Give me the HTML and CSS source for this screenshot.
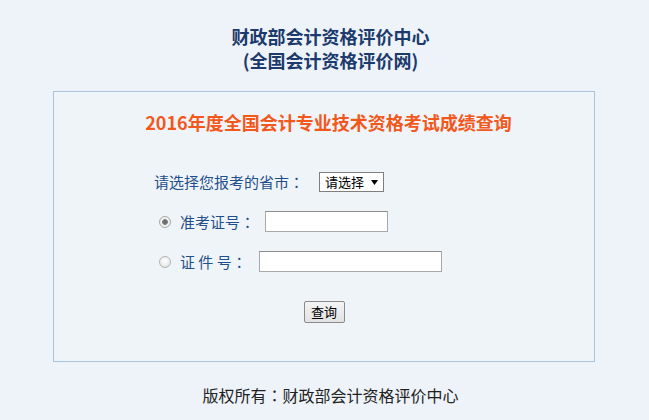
FILE: index.html
```html
<!DOCTYPE html>
<html lang="zh-CN">
<head>
<meta charset="utf-8">
<title>2016年度全国会计专业技术资格考试成绩查询</title>
<link rel="stylesheet" href="styles.css">
</head>
<body>
<div class="page">
  <header class="header">
    <div class="title">财政部会计资格评价中心</div>
    <div class="title">(全国会计资格评价网)</div>
  </header>
  <section class="box">
    <h2 class="heading">2016年度全国会计专业技术资格考试成绩查询</h2>
    <form class="form">
      <div class="row row-select">
        <span class="label">请选择您报考的省市<span class="colon" lang="zh-TW">：</span></span>
        <span class="select">
          <span class="select-text">请选择</span>
          <svg class="select-arrow" width="7" height="5" viewBox="0 0 7 5"><path d="M0 0H7L3.5 5Z" fill="#000"/></svg>
        </span>
      </div>
      <div class="row">
        <input class="radio" type="radio" name="t" checked>
        <span class="label label-radio">准考证号<span class="colon" lang="zh-TW">：</span></span>
        <input class="text text-short" type="text">
      </div>
      <div class="row">
        <input class="radio" type="radio" name="t">
        <span class="label label-radio">证 件 号<span class="colon" lang="zh-TW">：</span></span>
        <input class="text text-long" type="text">
      </div>
      <div class="actions">
        <button class="btn" type="button">查询</button>
      </div>
    </form>
  </section>
  <footer class="footer">版权所有<span class="colon" lang="zh-TW">：</span>财政部会计资格评价中心</footer>
</div>
</body>
</html>
```
FILE: styles.css
```css
html, body {
  margin: 0;
  padding: 0;
  background: #edf3f8;
}
body {
  font-family: "Noto Sans CJK SC", "Liberation Sans", sans-serif;
  color: #222;
}
.page {
  display: flex;
  flex-direction: column;
  width: 649px;
  height: 420px;
  overflow: hidden;
}
.header {
  padding-top: 24px;
  padding-left: 12px;
  text-align: center;
}
.title {
  font-size: 18px;
  font-weight: bold;
  line-height: 24px;
  color: #1c3a6b;
}
.colon {
  font-family: "Noto Sans CJK TC", "Noto Sans CJK SC", sans-serif;
}
.box {
  margin-top: 19px;
  margin-left: 53px;
  width: 540px;
  border: 1px solid #a9c4dc;
  background: #eff4f8;
  box-sizing: content-box;
}
.heading {
  margin: 0;
  padding-top: 18px;
  padding-left: 9px;
  font-size: 18px;
  line-height: 24px;
  font-weight: bold;
  text-align: center;
  color: #f2581c;
}
.form {
  margin: 38px 0 0 0;
  padding-left: 100px;
  padding-bottom: 38px;
}
.row {
  display: flex;
  align-items: center;
  height: 21px;
  margin-bottom: 19px;
}
.row-select {
  height: 20px;
}
.label {
  font-size: 15px;
  line-height: 20px;
  color: #1f4f8c;
  white-space: pre;
}
.select {
  display: flex;
  align-items: center;
  justify-content: space-between;
  box-sizing: border-box;
  width: 65px;
  height: 20px;
  margin-left: 15px;
  padding: 0 5px 0 5px;
  border: 1px solid #7f7f7f;
  background: #fff;
}
.select-text {
  font-size: 13px;
  line-height: 18px;
  color: #000;
}
.radio {
  appearance: none;
  -webkit-appearance: none;
  box-sizing: border-box;
  width: 12px;
  height: 12px;
  margin: 0 9px 0 5px;
  border: 1px solid #b3b3b3;
  border-radius: 50%;
  background: radial-gradient(circle at 50% 40%, #fff 0%, #eee 55%, #d6d6d6 100%);
}
.radio:checked {
  background: radial-gradient(circle, #666 0, #7a7a7a 2.5px, #f4f4f4 3.2px, #e6e6e6 100%);
  border-color: #a8a8a8;
}
.text {
  box-sizing: border-box;
  height: 21px;
  margin: 0;
  padding: 0 2px;
  border: 1px solid #a9a9a9;
  border-top-color: #8c8c8c;
  background: #fff;
  font-size: 13px;
}
.text-short {
  width: 123px;
  margin-left: 10px;
}
.text-long {
  width: 183px;
  margin-left: 12px;
}
.actions {
  display: flex;
  justify-content: center;
  padding-right: 100px;
  padding-top: 10px;
}
.btn {
  box-sizing: border-box;
  width: 41px;
  height: 22px;
  margin: 0;
  padding: 0;
  border: 1px solid #8a8a8a;
  border-radius: 2px;
  background: linear-gradient(#f4f4f4, #e2e2e2);
  font-family: "Noto Sans CJK SC", sans-serif;
  font-size: 13px;
  line-height: 20px;
  color: #000;
}
.footer {
  margin-top: 21px;
  padding-left: 12px;
  text-align: center;
  font-size: 16px;
  line-height: 24px;
  color: #222;
}
```
